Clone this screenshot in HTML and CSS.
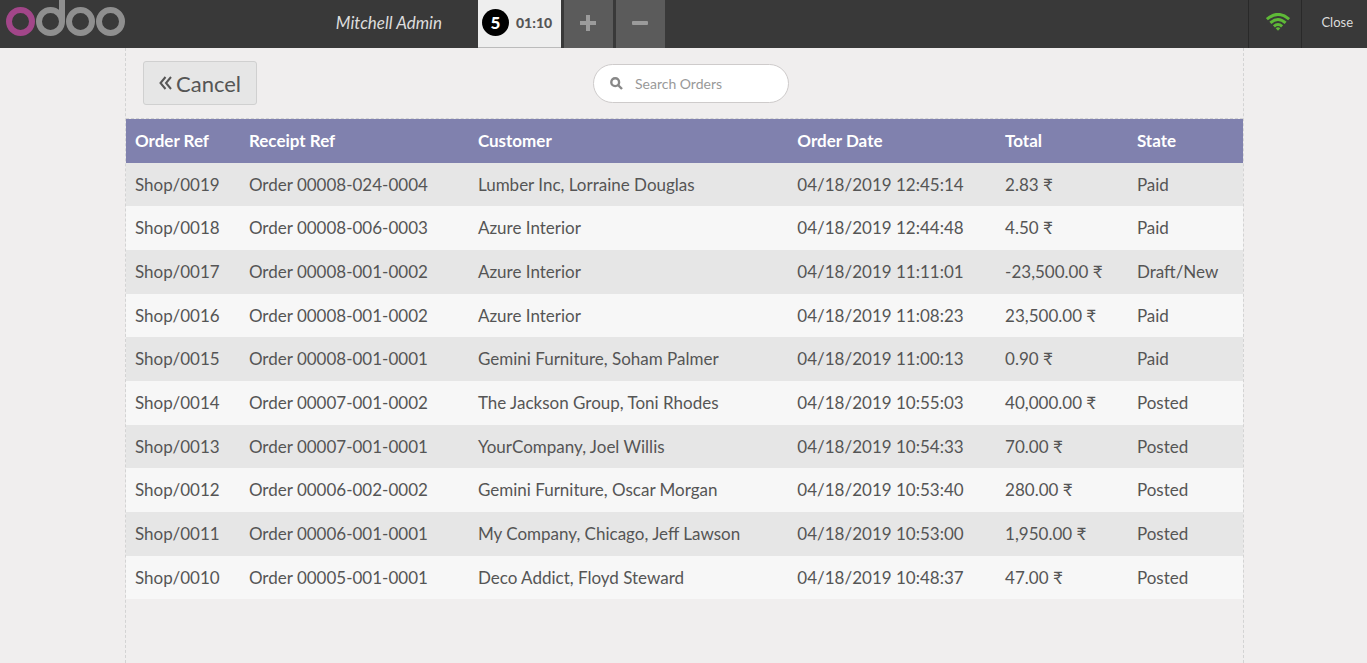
FILE: index.html
```html
<!DOCTYPE html>
<html lang="en">
<head>
<meta charset="utf-8">
<meta name="viewport" content="width=device-width, initial-scale=1">
<title>Orders - Point of Sale</title>
<link rel="stylesheet" href="styles.css">
</head>
<body>
<header class="topbar">
  <div class="branch">
    <svg class="logo" viewBox="0 0 126 48" role="img" aria-label="odoo">
      <g fill="none" stroke-width="6">
        <circle cx="20.5" cy="21.5" r="11.5" stroke="#a24689"/>
        <g stroke="#8f8f8f">
          <circle cx="50.5" cy="21.5" r="11.5"/>
          <path d="M62 0V21.500"/>
          <circle cx="80.500" cy="21.5" r="11.5"/>
          <circle cx="110.500" cy="21.5" r="11.5"/>
        </g>
      </g>
    </svg>
    <span class="username">Mitchell Admin</span>
  </div>
  <nav class="orders" aria-label="Open orders">
    <button class="order-tab" type="button"><span class="order-number">5</span><span class="order-time">01:10</span></button>
    <button class="square" type="button" aria-label="New order">
      <svg width="16" height="16" viewBox="0 0 16 16"><path d="M6 0h4v6h6v4h-6v6H6v-6H0V6h6z"/></svg>
    </button>
    <button class="square" type="button" aria-label="Delete order">
      <svg width="16" height="16" viewBox="0 0 16 16"><rect y="6" width="16" height="4" rx="1"/></svg>
    </button>
  </nav>
  <div class="status">
    <button class="sync" type="button" aria-label="Connected">
      <svg width="24" height="18" viewBox="0 0 24 18">
        <g fill="none" stroke="#5eb937" stroke-width="3">
          <path d="M.9 6.200Q12-3.400 23.100 6.200"/>
          <path d="M4.400 9.900Q12 3.200 19.600 9.900"/>
          <path d="M7.900 13.300Q12 9.600 16.100 13.300"/>
        </g>
        <path fill="#5eb937" d="M9.700 15.200Q12 13.500 14.300 15.200L12 17.800z"/>
      </svg>
    </button>
    <button class="close" type="button">Close</button>
  </div>
</header>
<main class="stage">
  <div class="screen">
    <div class="toolbar">
      <button class="cancel" type="button">
        <svg width="13" height="14" viewBox="0 0 13 14"><path d="M6.500 1L1.500 7l5 6M12 1L7 7l5 6"/></svg>
        <span>Cancel</span>
      </button>
      <label class="search">
        <svg width="13" height="13" viewBox="0 0 13 13" aria-hidden="true"><circle cx="5.200" cy="5.200" r="3.900"/><path d="M8 8l4 4"/></svg>
        <input type="text" placeholder="Search Orders" aria-label="Search Orders">
      </label>
    </div>
    <table class="list">
      <colgroup><col class="c-ref"><col class="c-receipt"><col class="c-customer"><col class="c-date"><col class="c-total"><col class="c-state"></colgroup>
      <thead>
        <tr><th>Order Ref</th><th>Receipt Ref</th><th>Customer</th><th>Order Date</th><th>Total</th><th>State</th></tr>
      </thead>
      <tbody>
        <tr><td>Shop/0019</td><td>Order 00008-024-0004</td><td>Lumber Inc, Lorraine Douglas</td><td>04/18/2019 12:45:14</td><td>2.83 ₹</td><td>Paid</td></tr>
        <tr><td>Shop/0018</td><td>Order 00008-006-0003</td><td>Azure Interior</td><td>04/18/2019 12:44:48</td><td>4.50 ₹</td><td>Paid</td></tr>
        <tr><td>Shop/0017</td><td>Order 00008-001-0002</td><td>Azure Interior</td><td>04/18/2019 11:11:01</td><td>-23,500.00 ₹</td><td>Draft/New</td></tr>
        <tr><td>Shop/0016</td><td>Order 00008-001-0002</td><td>Azure Interior</td><td>04/18/2019 11:08:23</td><td>23,500.00 ₹</td><td>Paid</td></tr>
        <tr><td>Shop/0015</td><td>Order 00008-001-0001</td><td>Gemini Furniture, Soham Palmer</td><td>04/18/2019 11:00:13</td><td>0.90 ₹</td><td>Paid</td></tr>
        <tr><td>Shop/0014</td><td>Order 00007-001-0002</td><td>The Jackson Group, Toni Rhodes</td><td>04/18/2019 10:55:03</td><td>40,000.00 ₹</td><td>Posted</td></tr>
        <tr><td>Shop/0013</td><td>Order 00007-001-0001</td><td>YourCompany, Joel Willis</td><td>04/18/2019 10:54:33</td><td>70.00 ₹</td><td>Posted</td></tr>
        <tr><td>Shop/0012</td><td>Order 00006-002-0002</td><td>Gemini Furniture, Oscar Morgan</td><td>04/18/2019 10:53:40</td><td>280.00 ₹</td><td>Posted</td></tr>
        <tr><td>Shop/0011</td><td>Order 00006-001-0001</td><td>My Company, Chicago, Jeff Lawson</td><td>04/18/2019 10:53:00</td><td>1,950.00 ₹</td><td>Posted</td></tr>
        <tr><td>Shop/0010</td><td>Order 00005-001-0001</td><td>Deco Addict, Floyd Steward</td><td>04/18/2019 10:48:37</td><td>47.00 ₹</td><td>Posted</td></tr>
      </tbody>
    </table>
  </div>
</main>
</body>
</html>
```
FILE: styles.css
```css
* { box-sizing: border-box; }
body {
  margin: 0;
  min-height: 100vh;
  display: flex;
  flex-direction: column;
  background: #f0eeee;
  color: #555;
  font-family: Lato, "Liberation Sans", sans-serif;
  font-size: 17px;
}
button, input { font: inherit; color: inherit; border: 0; margin: 0; padding: 0; background: none; }
button { cursor: pointer; }
svg { display: block; }

.topbar { display: flex; height: 48px; background: #393939; color: #ddd; }
.branch { display: flex; justify-content: space-between; width: 442px; }
.logo { width: 126px; height: 48px; }
.username { font-style: italic; line-height: 46px; }
.orders { display: flex; flex: 1; gap: 3px; padding-left: 36px; }
.order-tab {
  display: flex;
  align-items: center;
  gap: 7px;
  width: 83px;
  padding: 0 4px 2px;
  background: #eee;
  border-bottom: 1px solid #bbb;
  color: #555;
  font-size: 14px;
  font-weight: 900;
}
.order-number {
  width: 27px;
  height: 27px;
  border-radius: 50%;
  background: #000;
  color: #fff;
  font-size: 17px;
  line-height: 27px;
  text-align: center;
}
.square {
  display: flex;
  align-items: center;
  justify-content: center;
  width: 49px;
  padding: 0 1px 2px 0;
  background: #5b5b5b;
  fill: #9b9b9b;
}
.status { display: flex; font-size: 13px; }
.status button { border-left: 1px solid #292929; }
.sync { width: 53px; padding: 0 11px 4px 17px; }
.close { padding: 0 14px 4px 19px; }

.stage { flex: 1; display: flex; padding: 0 123px 0 125px; }
.screen { flex: 1; border: 1px dashed #d3d3d3; border-width: 0 1px; }
.toolbar {
  display: grid;
  grid-template-columns: 1fr auto 1fr;
  align-items: center;
  height: 71px;
  padding: 0 4px 0 17px;
  border-bottom: 1px dashed #d3d3d3;
}
.cancel {
  justify-self: start;
  display: flex;
  align-items: center;
  gap: 4px;
  height: 44px;
  padding: 0 15px;
  background: #e6e6e6;
  border: 1px solid #d0d0d0;
  border-radius: 3px;
  font-size: 22px;
}
.cancel svg { fill: none; stroke: #555; stroke-width: 2; }
.search {
  display: flex;
  align-items: center;
  gap: 12px;
  width: 196px;
  height: 39px;
  padding: 0 16px;
  background: #fff;
  border: 1px solid #cecbcb;
  border-radius: 20px;
  font-size: 14px;
}
.search svg { flex: none; fill: none; stroke: #888; stroke-width: 2.4; }
.search input { flex: 1; min-width: 0; outline: none; }
.search input::placeholder { color: #999; opacity: 1; }

.list { width: 100%; table-layout: fixed; border-collapse: collapse; line-height: 1.51; }
.c-ref { width: 10.2%; }
.c-receipt { width: 20.5%; }
.c-customer { width: 28.6%; }
.c-date { width: 18.6%; }
.c-total { width: 11.8%; }
.c-state { width: 10.3%; }
.list th, .list td { padding: 9px; text-align: left; white-space: nowrap; }
.list thead { background: #8081ae; color: #fff; }
.list tbody tr { background: #f7f7f7; }
.list tbody tr:nth-child(odd) { background: #e6e6e6; }
```
